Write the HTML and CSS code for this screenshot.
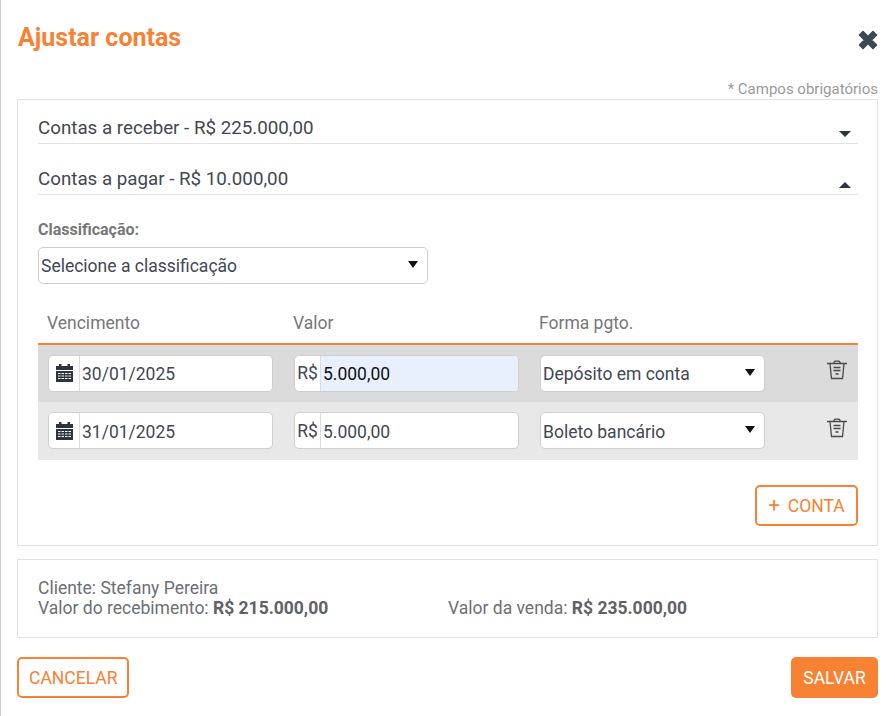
FILE: index.html
```html
<!DOCTYPE html>
<html>
<head>
  <meta name="viewport" content="width=device-width, initial-scale=1">
  <link rel="stylesheet" href="styles.css">
</head>
<body>
  <div class="modal">

    <!-- Header -->
    <div class="modal-header">
      <h1>Ajustar contas</h1>
      <svg class="close-icon" viewBox="0 0 20 20" width="20" height="20">
        <path d="M1.500 5 5 1.500 10 6.500 15 1.500 18.500 5 13.500 10 18.500 15 15 18.500 10 13.500 5 18.500 1.500 15 6.500 10Z" fill="#3d4852" stroke="#3d4852" stroke-width="1.600" stroke-linejoin="round"/>
      </svg>
    </div>
    <p class="required-note">* Campos obrigatórios</p>

    <!-- Main panel -->
    <div class="panel main-panel">
      <div class="accordion-row">
        <span>Contas a receber - R$ 225.000,00</span>
        <i class="caret caret-down"></i>
      </div>
      <div class="accordion-row">
        <span>Contas a pagar - R$ 10.000,00</span>
        <i class="caret caret-up"></i>
      </div>

      <label class="field-label">Classificação:</label>
      <div class="select select-wide">
        <span>Selecione a classificação</span>
        <i class="select-arrow"></i>
      </div>

      <!-- Installments table -->
      <div class="table-head">
        <span>Vencimento</span>
        <span>Valor</span>
        <span>Forma pgto.</span>
      </div>

      <div class="table-row row-dark">
        <div class="input-group">
          <span class="addon addon-icon">
            <svg class="calendar-icon" viewBox="0 0 17 18" width="17" height="18">
              <path d="M3 0h2.500v2h6V0H14v2h3v4H0V2h3zM0 7h17v11H0zM2 9v1h2.500V9zm3.500 0v1h2.500V9zm3.500 0v1h2.500V9zm3.500 0v1H15V9zM2 11.500v1h2.500v-1zm3.500 0v1h2.500v-1zm3.500 0v1h2.500v-1zm3.500 0v1H15v-1zM2 14v1h2.500v-1zm3.500 0v1h2.500v-1zm3.500 0v1h2.500v-1zm3.500 0v1H15v-1z" fill="#2b3440" fill-rule="evenodd"/>
            </svg>
          </span>
          <span class="input-value">30/01/2025</span>
        </div>
        <div class="input-group">
          <span class="addon">R$</span>
          <span class="input-value input-focus">5.000,00</span>
        </div>
        <div class="select">
          <span>Depósito em conta</span>
          <i class="select-arrow"></i>
        </div>
        <svg class="trash-icon" viewBox="0 0 20 20" width="20" height="20">
          <path d="M0 3.500h20M7 3.500V2.200L8 1.200h4l1 1v1.300M3 3.500 4.500 18.500h11L17 3.500M6.500 7.500h7M6.500 10.500h7M8.500 14h3" fill="none" stroke="#4a4a4a" stroke-width="1.300"/>
        </svg>
      </div>

      <div class="table-row row-light">
        <div class="input-group">
          <span class="addon addon-icon">
            <svg class="calendar-icon" viewBox="0 0 17 18" width="17" height="18">
              <path d="M3 0h2.500v2h6V0H14v2h3v4H0V2h3zM0 7h17v11H0zM2 9v1h2.500V9zm3.500 0v1h2.500V9zm3.500 0v1h2.500V9zm3.500 0v1H15V9zM2 11.500v1h2.500v-1zm3.500 0v1h2.500v-1zm3.500 0v1h2.500v-1zm3.500 0v1H15v-1zM2 14v1h2.500v-1zm3.500 0v1h2.500v-1zm3.500 0v1h2.500v-1zm3.500 0v1H15v-1z" fill="#2b3440" fill-rule="evenodd"/>
            </svg>
          </span>
          <span class="input-value">31/01/2025</span>
        </div>
        <div class="input-group">
          <span class="addon">R$</span>
          <span class="input-value">5.000,00</span>
        </div>
        <div class="select">
          <span>Boleto bancário</span>
          <i class="select-arrow"></i>
        </div>
        <svg class="trash-icon" viewBox="0 0 20 20" width="20" height="20">
          <path d="M0 3.500h20M7 3.500V2.200L8 1.200h4l1 1v1.300M3 3.500 4.500 18.500h11L17 3.500M6.500 7.500h7M6.500 10.500h7M8.500 14h3" fill="none" stroke="#4a4a4a" stroke-width="1.300"/>
        </svg>
      </div>

      <div class="add-row">
        <button class="btn btn-outline btn-add"><span class="plus">+</span>CONTA</button>
      </div>
    </div>

    <!-- Summary panel -->
    <div class="panel summary-panel">
      <p>Cliente: Stefany Pereira</p>
      <div class="summary-values">
        <p>Valor do recebimento: <b>R$ 215.000,00</b></p>
        <p>Valor da venda: <b>R$ 235.000,00</b></p>
      </div>
    </div>

    <!-- Footer -->
    <div class="modal-footer">
      <button class="btn btn-outline">CANCELAR</button>
      <button class="btn btn-primary">SALVAR</button>
    </div>
  </div>
</body>
</html>
```

FILE: styles.css
```css
/* =====================
   BASIC STYLES
   ===================== */
* {
  box-sizing: border-box;
}
html, body {
  margin: 0;
  height: 100%;
  background: #fff;
}
body {
  font-family: Roboto, "Liberation Sans", sans-serif;
  color: #3f4854;
  overflow: hidden;
}
h1, p {
  margin: 0;
}

.modal {
  width: 895px;
  height: 716px;
  padding: 0 17px 0 16px;
  border-left: 1px solid #d0d0d0;
}

/* =====================
   HEADER
   ===================== */
.modal-header {
  display: flex;
  justify-content: space-between;
  height: 81px;
  padding: 23px 0 0 1px;
}
.modal-header h1 {
  font-size: 25px;
  line-height: 30px;
  font-weight: 700;
  color: #f78233;
}
.close-icon {
  margin-top: 7px;
}
.required-note {
  font-size: 15px;
  line-height: 16px;
  height: 18px;
  text-align: right;
  color: #999;
}

/* =====================
   PANELS
   ===================== */
.panel {
  border: 1px solid #e2e2e2;
}
.main-panel {
  height: 447px;
  padding: 0 19px 0 20px;
}

.accordion-row {
  display: flex;
  justify-content: space-between;
  align-items: flex-end;
  height: 51px;
  border-bottom: 1px solid #e2e2e2;
  font-size: 18.75px;
  line-height: 24px;
  padding-bottom: 3px;
}
.accordion-row:first-child {
  height: 44px;
}
.caret {
  width: 0;
  height: 0;
  margin-right: 7px;
  border-left: 6px solid transparent;
  border-right: 6px solid transparent;
}
.caret-down {
  margin-bottom: 3px;
  border-top: 6px solid #2b3440;
}
.caret-up {
  margin-bottom: 3px;
  border-bottom: 6px solid #2b3440;
}

.field-label {
  display: block;
  margin-top: 26px;
  font-size: 16px;
  line-height: 17px;
  font-weight: 700;
  color: #777;
}

/* =====================
   FORM CONTROLS
   ===================== */
.select, .input-group {
  display: flex;
  align-items: center;
  width: 225px;
  height: 37px;
  background: #fff;
  border: 1px solid #cfcfcf;
  border-radius: 5px;
  font-size: 17.5px;
}
.select {
  justify-content: space-between;
  padding: 0 9px 0 2px;
}
.select-wide {
  width: 390px;
  margin-top: 9px;
}
.select-arrow {
  width: 0;
  height: 0;
  margin-top: -2px;
  border-left: 5px solid transparent;
  border-right: 5px solid transparent;
  border-top: 7px solid #111;
}
.addon {
  display: flex;
  align-items: center;
  justify-content: center;
  flex: none;
  width: 26px;
  height: 100%;
  border-right: 1px solid #dcdcdc;
}
.addon-icon {
  width: 31px;
}
.input-value {
  display: flex;
  align-items: center;
  flex: 1;
  height: 100%;
  padding: 2px 0 0 2px;
}
.input-focus {
  background: #e8f0fe;
  border-radius: 0 4px 4px 0;
  color: #111;
}

/* =====================
   TABLE
   ===================== */
.table-head {
  display: grid;
  grid-template-columns: 246px 246px 1fr;
  height: 61px;
  padding: 28px 0 0 9px;
  border-bottom: 2px solid #f78233;
  font-size: 17.5px;
  line-height: 22px;
  color: #777;
}
.table-row {
  display: flex;
  align-items: center;
  gap: 21px;
  padding: 0 0 1px 10px;
}
.table-row .select span {
  padding-top: 2px;
}
.row-dark {
  height: 57px;
  background: #dbdbdb;
}
.row-light {
  height: 58px;
  background: #e8e8e8;
}
.trash-icon {
  margin: -6px 0 0 41px;
}

/* =====================
   BUTTONS
   ===================== */
.btn {
  height: 41px;
  padding: 0 10px;
  border-radius: 5px;
  font-family: inherit;
  font-size: 17.5px;
}
.btn-outline {
  background: #fff;
  border: 2px solid #f78233;
  color: #f78233;
}
.btn-primary {
  background: #f78233;
  border: none;
  color: #fff;
}
.btn-add {
  width: 103px;
}
.plus {
  margin-right: 8px;
  font-size: 20px;
  line-height: 18px;
}
.add-row {
  display: flex;
  justify-content: flex-end;
  margin-top: 25px;
}

/* =====================
   SUMMARY & FOOTER
   ===================== */
.summary-panel {
  height: 79px;
  margin-top: 13px;
  padding: 18px 20px 0;
  font-size: 17.5px;
  line-height: 20px;
  color: #6b6f76;
}
.summary-values {
  display: grid;
  grid-template-columns: 410px 1fr;
}
.summary-values b {
  color: #5f6266;
}
.modal-footer {
  display: flex;
  justify-content: space-between;
  margin-top: 19px;
}
.modal-footer .btn-outline {
  width: 112px;
}
.modal-footer .btn-primary {
  width: 87px;
}
```
